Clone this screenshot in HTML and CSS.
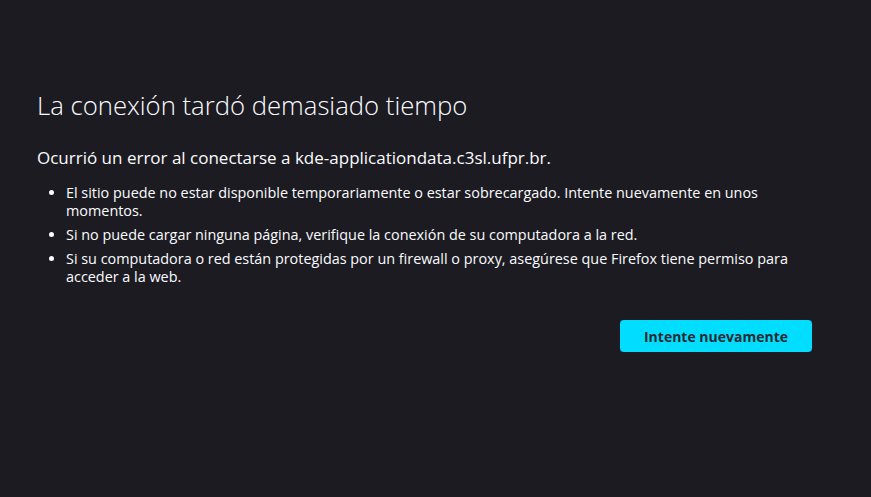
FILE: index.html
```html
<!DOCTYPE html>
<html lang="es">
<head>
<meta charset="utf-8">
<title>Problema al cargar la página</title>
<link rel="stylesheet" href="styles.css">
</head>
<body>
<div class="container">
  <h1 class="title">La conexión tardó demasiado tiempo</h1>
  <p class="subtitle">Ocurrió un error al conectarse a kde-applicationdata.c3sl.ufpr.br.</p>
  <ul class="desc">
    <li>El sitio puede no estar disponible temporariamente o estar sobrecargado. Intente nuevamente en unos momentos.</li>
    <li>Si no puede cargar ninguna página, verifique la conexión de su computadora a la red.</li>
    <li>Si su computadora o red están protegidas por un firewall o proxy, asegúrese que Firefox tiene permiso para acceder a la web.</li>
  </ul>
  <div class="actions">
    <button class="retry">Intente nuevamente</button>
  </div>
</div>
</body>
</html>
```
FILE: styles.css
```css
html, body {
  margin: 0;
  padding: 0;
  height: 100%;
  background: #1c1b22;
  color: #fbfbfe;
  font-family: "Open Sans", "Noto Sans", sans-serif;
}
.container {
  width: 775px;
  padding: 90px 0 0 37px;
}
.title {
  margin: 0;
  font-size: 25.7px;
  font-weight: 300;
  line-height: 32px;
}
.subtitle {
  margin: 25px 0 0;
  font-size: 17px;
  line-height: 22px;
}
.desc {
  margin: 15px 0 0;
  padding-left: 29px;
  font-size: 14.4px;
  line-height: 18px;
}
.desc li {
  margin-bottom: 6px;
}
.actions {
  display: flex;
  justify-content: flex-end;
  margin-top: 34px;
}
.retry {
  width: 192px;
  height: 32px;
  border: none;
  border-radius: 4px;
  background: #00ddff;
  color: #2b2a33;
  font-family: inherit;
  font-size: 14px;
  font-weight: 700;
}
```
